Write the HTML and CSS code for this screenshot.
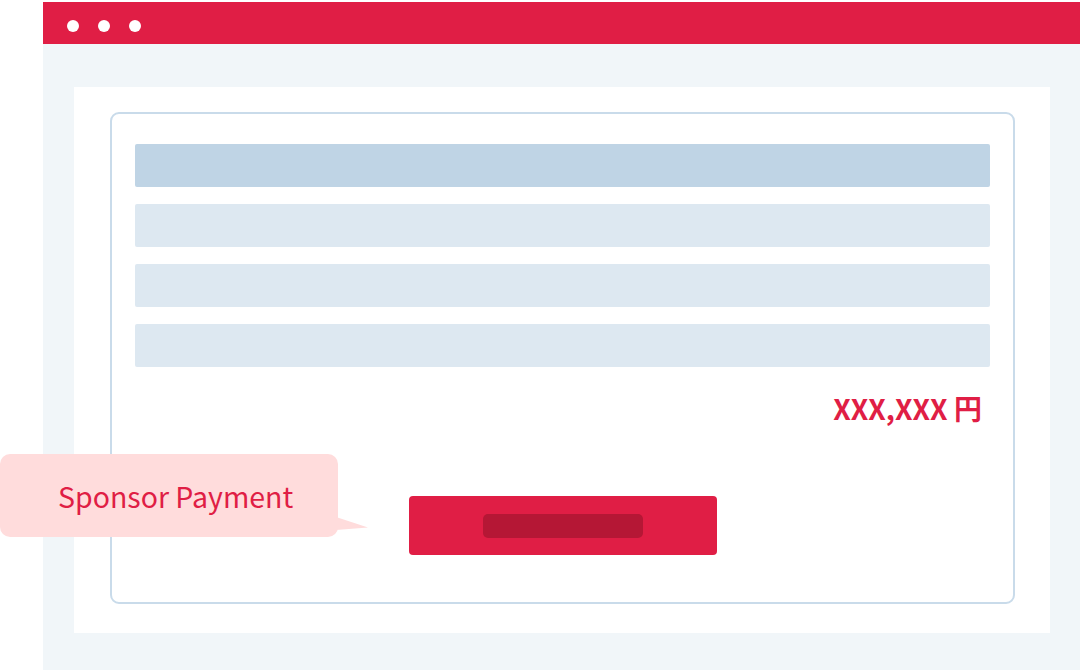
FILE: index.html
```html
<!DOCTYPE html>
<html lang="ja">
<head>
<meta charset="utf-8">
<link rel="stylesheet" href="styles.css">
</head>
<body>
<div class="window">
  <div class="titlebar">
    <span class="dot"></span><span class="dot"></span><span class="dot"></span>
  </div>
  <div class="viewport">
    <div class="panel">
      <div class="card">
        <div class="bar bar-head"></div>
        <div class="bar"></div>
        <div class="bar"></div>
        <div class="bar"></div>
        <div class="price">XXX,XXX 円</div>
        <div class="button"><span class="button-label"></span></div>
      </div>
    </div>
  </div>
</div>
<div class="bubble">Sponsor Payment</div>
</body>
</html>
```
FILE: styles.css
```css
html, body {
  margin: 0;
  padding: 0;
  background: #ffffff;
  width: 1080px;
  height: 670px;
  overflow: hidden;
  font-family: "Noto Sans CJK JP", "Noto Sans", sans-serif;
}
.window {
  margin: 2px 0 0 43px;
  width: 1037px;
  height: 668px;
  display: flex;
  flex-direction: column;
}
.titlebar {
  height: 42px;
  background: #e01e45;
  display: flex;
  align-items: flex-start;
  padding: 18px 0 0 24px;
  box-sizing: border-box;
  gap: 19px;
}
.dot {
  width: 12px;
  height: 12px;
  border-radius: 50%;
  background: #ffffff;
}
.viewport {
  flex: 1;
  background: #f1f6f9;
  padding: 43px 30px 37px 31px;
  display: flex;
}
.panel {
  flex: 1;
  background: #ffffff;
  padding: 25px 35px 29px 36px;
  display: flex;
}
.card {
  flex: 1;
  border: 2px solid #c9dbea;
  border-radius: 9px;
  padding: 30px 23px 0 23px;
  display: flex;
  flex-direction: column;
}
.bar {
  height: 43px;
  background: #dde8f1;
  border-radius: 2px;
  margin-bottom: 17px;
}
.bar-head {
  background: #bfd4e5;
}
.bar:nth-child(4) {
  margin-bottom: 0;
}
.price {
  align-self: flex-end;
  margin: 21px 8px 0 0;
  font-size: 28px;
  line-height: 40px;
  font-weight: 700;
  color: #e01e45;
}
.button {
  align-self: center;
  margin-top: 68px;
  width: 308px;
  height: 59px;
  background: #e01e45;
  border-radius: 4px;
  display: flex;
  align-items: center;
  justify-content: center;
}
.button-label {
  width: 160px;
  height: 24px;
  background: #b51735;
  border-radius: 5px;
}
.bubble {
  position: absolute;
  left: 0;
  top: 454px;
  width: 338px;
  height: 83px;
  box-sizing: border-box;
  padding-left: 58px;
  background: #ffdcdc;
  border-radius: 10px;
  color: #e01e45;
  font-size: 28.5px;
  line-height: 83px;
  white-space: nowrap;
}
.bubble::after {
  content: "";
  position: absolute;
  left: 336px;
  top: 63px;
  width: 32px;
  height: 13px;
  background: #ffdcdc;
  clip-path: polygon(0 0, 100% 80%, 0 100%);
}
```
